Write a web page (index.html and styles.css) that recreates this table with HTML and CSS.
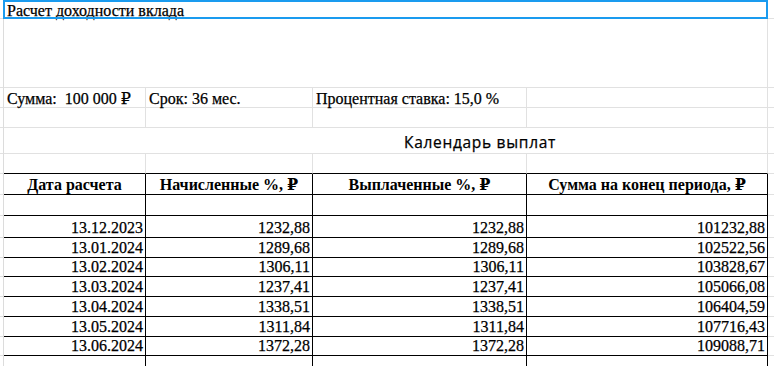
FILE: index.html
```html
<!DOCTYPE html>
<html lang="ru">
<head>
<meta charset="utf-8">
<title>Расчет доходности вклада</title>
<link rel="stylesheet" href="styles.css">
</head>
<body>
<div class="sheet">
  <div class="selection"></div>

  <div class="g"></div><div class="c span4 title">Расчет доходности вклада</div><div class="c e"></div>
  <div class="g"></div><div class="c span4"></div><div class="c e"></div>

  <div class="g"></div><div class="c pre">Сумма:  100 000 ₽</div><div class="c">Срок: 36 мес.</div><div class="c">Процентная ставка: 15,0 %</div><div class="c"></div><div class="c e"></div>
  <div class="g"></div><div class="c"></div><div class="c"></div><div class="c"></div><div class="c"></div><div class="c e"></div>

  <div class="g"></div><div class="c span4 caption">Календарь выплат</div><div class="c e"></div>
  <div class="g"></div><div class="c bb"></div><div class="c bb"></div><div class="c bb"></div><div class="c bb"></div><div class="c e"></div>

  <div class="g"></div><div class="c t th">Дата расчета</div><div class="c t th">Начисленные %, ₽</div><div class="c t th">Выплаченные %, ₽</div><div class="c t th">Сумма на конец периода, ₽</div><div class="c e"></div>
  <div class="g"></div><div class="c t"></div><div class="c t"></div><div class="c t"></div><div class="c t"></div><div class="c e"></div>

  <div class="g"></div><div class="c t num">13.12.2023</div><div class="c t num">1232,88</div><div class="c t num">1232,88</div><div class="c t num">101232,88</div><div class="c e"></div>
  <div class="g"></div><div class="c t num">13.01.2024</div><div class="c t num">1289,68</div><div class="c t num">1289,68</div><div class="c t num">102522,56</div><div class="c e"></div>
  <div class="g"></div><div class="c t num">13.02.2024</div><div class="c t num">1306,11</div><div class="c t num">1306,11</div><div class="c t num">103828,67</div><div class="c e"></div>
  <div class="g"></div><div class="c t num">13.03.2024</div><div class="c t num">1237,41</div><div class="c t num">1237,41</div><div class="c t num">105066,08</div><div class="c e"></div>
  <div class="g"></div><div class="c t num">13.04.2024</div><div class="c t num">1338,51</div><div class="c t num">1338,51</div><div class="c t num">106404,59</div><div class="c e"></div>
  <div class="g"></div><div class="c t num">13.05.2024</div><div class="c t num">1311,84</div><div class="c t num">1311,84</div><div class="c t num">107716,43</div><div class="c e"></div>
  <div class="g"></div><div class="c t num">13.06.2024</div><div class="c t num">1372,28</div><div class="c t num">1372,28</div><div class="c t num">109088,71</div><div class="c e"></div>
  <div class="g"></div><div class="c t num"></div><div class="c t num"></div><div class="c t num"></div><div class="c t num"></div><div class="c e"></div>
</div>
</body>
</html>
```

FILE: styles.css
```css
html, body {
  margin: 0;
  padding: 0;
  background: #fff;
  overflow: hidden;
}

.sheet {
  position: relative;
  display: grid;
  grid-template-columns: 4px 142px 167px 214px 241px 1fr;
  grid-template-rows: 19px 69px 20px 20px 26px 20px 21px 21px 22px 20px 19px 20px 20px 20px 19px 20px;
  width: 774px;
  font-family: "Liberation Serif", "DejaVu Serif", serif;
  font-size: 16px;
  line-height: 14px;
  color: #000;
  -webkit-text-stroke: 0.25px #000;
}

.g {
  border-right: 1px solid #dcdcdc;
  border-bottom: 1px solid #e1e1e1;
}

.c {
  box-sizing: border-box;
  border-right: 1px solid #e1e1e1;
  border-bottom: 1px solid #e1e1e1;
  display: flex;
  align-items: flex-end;
  padding: 0 2px 1px 3px;
  white-space: nowrap;
  overflow: visible;
  min-width: 0;
}

.c.e {
  border-right: none;
}

.span4 {
  grid-column: span 4;
}

.pre {
  white-space: pre;
}

.title {
  padding-bottom: 0;
}

.caption {
  font-family: "Open Sans", "Noto Sans", sans-serif;
  font-size: 15.5px;
  letter-spacing: 0.7px;
  line-height: 18px;
  padding-left: 400px;
  padding-bottom: 2px;
}

.bb {
  border-bottom-color: #000;
}

.t {
  border-right-color: #000;
  border-bottom-color: #000;
}

.th {
  font-weight: bold;
  justify-content: center;
  padding-left: 2px;
  padding-bottom: 2px;
  -webkit-text-stroke: 0;
}

.num {
  justify-content: flex-end;
  padding-right: 2px;
  padding-bottom: 2px;
}

.selection {
  position: absolute;
  left: 3px;
  top: 0;
  width: 765px;
  height: 19px;
  box-sizing: border-box;
  border: 2px solid #1a9bef;
  pointer-events: none;
}
```
